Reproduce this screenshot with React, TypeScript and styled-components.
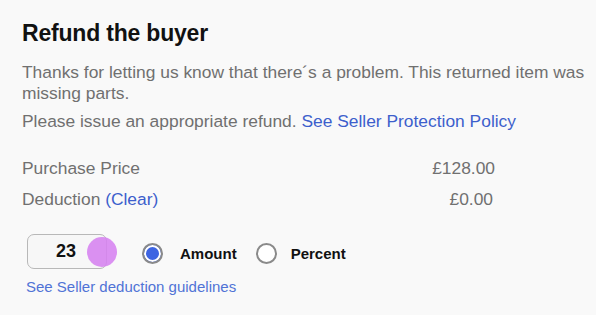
import React from "react";
import styled, { createGlobalStyle } from "styled-components";

const Global = createGlobalStyle`
  html, body { margin: 0; padding: 0; background: #f9f9f9; }
  body { font-family: "Liberation Sans", Arial, sans-serif; }
`;

const Page = styled.div`
  width: 596px;
  height: 315px;
  box-sizing: border-box;
  padding: 19px 0 0 22px;
  background: #f9f9f9;
  overflow: hidden;
  display: flex;
  flex-direction: column;
`;

const Title = styled.h1`
  margin: 0;
  font-size: 23px;
  font-weight: 700;
  color: #111;
  letter-spacing: -0.2px;
  line-height: 28px;
`;

const Para = styled.p<{ $top?: number }>`
  margin: ${(p) => p.$top ?? 0}px 0 0 0;
  font-size: 17.4px;
  line-height: 21px;
  color: #707070;
`;

const Link = styled.a<{ $size?: number; $light?: boolean }>`
  color: ${(p) => (p.$light ? "#5073d6" : "#3d5fcc")};
  text-decoration: none;
  font-size: ${(p) => (p.$size ? `${p.$size}px` : "inherit")};
`;

const Table = styled.div`
  margin-top: 25px;
  width: 473px;
  display: flex;
  flex-direction: column;
  gap: 9px;
`;

const Row = styled.div`
  display: flex;
  justify-content: space-between;
  font-size: 17.4px;
  line-height: 22px;
  color: #707070;
`;

const Value = styled.span<{ $pr?: number }>`
  padding-right: ${(p) => p.$pr ?? 0}px;
`;

const Controls = styled.div`
  margin-top: 24px;
  margin-left: 5px;
  display: flex;
  align-items: center;
`;

const InputWrap = styled.div`
  position: relative;
  width: 80px;
  height: 35px;
`;

const Input = styled.div`
  box-sizing: border-box;
  width: 80px;
  height: 35px;
  border: 1px solid #b8b8b8;
  border-radius: 7px;
  background: #f7f7f7;
  display: flex;
  align-items: center;
  justify-content: center;
  padding-right: 2px;
  font-size: 18px;
  font-weight: 700;
  color: #111;
`;

const Touch = styled.span`
  position: absolute;
  left: 60px;
  top: 3px;
  width: 30px;
  height: 30px;
  border-radius: 50%;
  background: rgba(214, 130, 240, 0.88);
`;

const Radio = styled.span<{ $checked?: boolean }>`
  box-sizing: border-box;
  width: 21px;
  height: 21px;
  border-radius: 50%;
  border: 2px solid #8a8a8a;
  background: ${(p) => (p.$checked ? "#3d64e2" : "#fff")};
  box-shadow: ${(p) => (p.$checked ? "inset 0 0 0 2px #fff" : "none")};
  flex: none;
`;

const RadioLabel = styled.label<{ $ml: number; $gap: number }>`
  display: flex;
  align-items: center;
  gap: ${(p) => p.$gap}px;
  margin-left: ${(p) => p.$ml}px;
  padding-top: 4px;
  font-size: 15px;
  font-weight: 700;
  color: #111;
`;

const Guide = styled.div`
  margin-top: 9px;
  margin-left: 4px;
  line-height: 18px;
`;

export default function App() {
  return (
    <>
      <Global />
      <Page>
        <Title>Refund the buyer</Title>
        <Para $top={15}>
          Thanks for letting us know that there´s a problem. This returned item was missing parts.
        </Para>
        <Para $top={7}>
          Please issue an appropriate refund. <Link>See Seller Protection Policy</Link>
        </Para>
        <Table>
          <Row>
            <span>Purchase Price</span>
            <Value>£128.00</Value>
          </Row>
          <Row>
            <span>
              Deduction <Link>(Clear)</Link>
            </span>
            <Value $pr={2}>£0.00</Value>
          </Row>
        </Table>
        <Controls>
          <InputWrap>
            <Input>23</Input>
            <Touch />
          </InputWrap>
          <RadioLabel $ml={35} $gap={17}>
            <Radio $checked />
            Amount
          </RadioLabel>
          <RadioLabel $ml={19} $gap={14}>
            <Radio />
            Percent
          </RadioLabel>
        </Controls>
        <Guide>
          <Link $size={15} $light>
            See Seller deduction guidelines
          </Link>
        </Guide>
      </Page>
    </>
  );
}
